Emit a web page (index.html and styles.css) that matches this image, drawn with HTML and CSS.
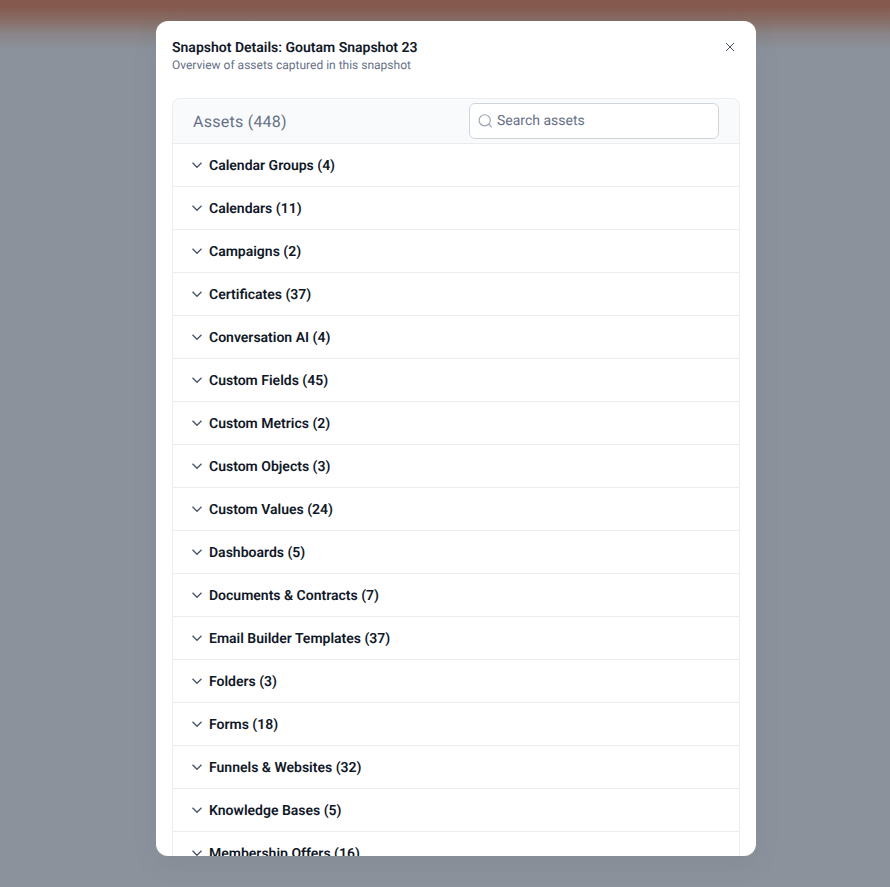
FILE: index.html
```html
<!DOCTYPE html>
<html lang="en">
<head>
<meta charset="utf-8">
<title>Snapshot Details</title>
<link rel="stylesheet" href="styles.css">
</head>
<body>
<div class="backdrop">
  <section class="modal">
    <header class="modal-head">
      <div>
        <h2 class="modal-title">Snapshot Details: Goutam Snapshot 23</h2>
        <p class="modal-sub">Overview of assets captured in this snapshot</p>
      </div>
      <svg class="close" viewBox="0 0 12 12" width="12" height="12"><path d="M2 2l8 8M10 2l-8 8"/></svg>
    </header>
    <div class="card">
      <div class="card-head">
        <span class="card-title">Assets (448)</span>
        <div class="search">
          <svg class="search-icon" viewBox="0 0 16 16" width="16" height="16"><circle cx="6.7" cy="7.3" r="5.6"/><path d="M10.8 11.2l3 3.2"/></svg>
          <span class="search-text">Search assets</span>
        </div>
      </div>
      <div class="row"><svg class="chev" viewBox="0 0 12 12" width="12" height="12"><path d="M1.5 3.8l4.5 4.5 4.5-4.5"/></svg><span class="row-label">Calendar Groups (4)</span></div>
      <div class="row"><svg class="chev" viewBox="0 0 12 12" width="12" height="12"><path d="M1.5 3.8l4.5 4.5 4.5-4.5"/></svg><span class="row-label">Calendars (11)</span></div>
      <div class="row"><svg class="chev" viewBox="0 0 12 12" width="12" height="12"><path d="M1.5 3.8l4.5 4.5 4.5-4.5"/></svg><span class="row-label">Campaigns (2)</span></div>
      <div class="row"><svg class="chev" viewBox="0 0 12 12" width="12" height="12"><path d="M1.5 3.8l4.5 4.5 4.5-4.5"/></svg><span class="row-label">Certificates (37)</span></div>
      <div class="row"><svg class="chev" viewBox="0 0 12 12" width="12" height="12"><path d="M1.5 3.8l4.5 4.5 4.5-4.5"/></svg><span class="row-label">Conversation AI (4)</span></div>
      <div class="row"><svg class="chev" viewBox="0 0 12 12" width="12" height="12"><path d="M1.5 3.8l4.5 4.5 4.5-4.5"/></svg><span class="row-label">Custom Fields (45)</span></div>
      <div class="row"><svg class="chev" viewBox="0 0 12 12" width="12" height="12"><path d="M1.5 3.8l4.5 4.5 4.5-4.5"/></svg><span class="row-label">Custom Metrics (2)</span></div>
      <div class="row"><svg class="chev" viewBox="0 0 12 12" width="12" height="12"><path d="M1.5 3.8l4.5 4.5 4.5-4.5"/></svg><span class="row-label">Custom Objects (3)</span></div>
      <div class="row"><svg class="chev" viewBox="0 0 12 12" width="12" height="12"><path d="M1.5 3.8l4.5 4.5 4.5-4.5"/></svg><span class="row-label">Custom Values (24)</span></div>
      <div class="row"><svg class="chev" viewBox="0 0 12 12" width="12" height="12"><path d="M1.5 3.8l4.5 4.5 4.5-4.5"/></svg><span class="row-label">Dashboards (5)</span></div>
      <div class="row"><svg class="chev" viewBox="0 0 12 12" width="12" height="12"><path d="M1.5 3.8l4.5 4.5 4.5-4.5"/></svg><span class="row-label">Documents &amp; Contracts (7)</span></div>
      <div class="row"><svg class="chev" viewBox="0 0 12 12" width="12" height="12"><path d="M1.5 3.8l4.5 4.5 4.5-4.5"/></svg><span class="row-label">Email Builder Templates (37)</span></div>
      <div class="row"><svg class="chev" viewBox="0 0 12 12" width="12" height="12"><path d="M1.5 3.8l4.5 4.5 4.5-4.5"/></svg><span class="row-label">Folders (3)</span></div>
      <div class="row"><svg class="chev" viewBox="0 0 12 12" width="12" height="12"><path d="M1.5 3.8l4.5 4.5 4.5-4.5"/></svg><span class="row-label">Forms (18)</span></div>
      <div class="row"><svg class="chev" viewBox="0 0 12 12" width="12" height="12"><path d="M1.5 3.8l4.5 4.5 4.5-4.5"/></svg><span class="row-label">Funnels &amp; Websites (32)</span></div>
      <div class="row"><svg class="chev" viewBox="0 0 12 12" width="12" height="12"><path d="M1.5 3.8l4.5 4.5 4.5-4.5"/></svg><span class="row-label">Knowledge Bases (5)</span></div>
      <div class="row"><svg class="chev" viewBox="0 0 12 12" width="12" height="12"><path d="M1.5 3.8l4.5 4.5 4.5-4.5"/></svg><span class="row-label">Membership Offers (16)</span></div>
    </div>
  </section>
</div>
</body>
</html>
```

FILE: styles.css
```css
* { box-sizing: border-box; }
html, body { margin: 0; height: 100%; overflow: hidden; }
body {
  font-family: Roboto, "Liberation Sans", sans-serif;
  text-rendering: geometricPrecision;
}

.backdrop {
  height: 887px;
  padding: 21px 134px 31px 156px;
  background: linear-gradient(to bottom, #85594e 0, #85594e 6px, #877069 22px, #8a8589 34px, #8b929c 50px, #8b929c 100%);
}
.modal {
  width: 600px;
  height: 835px;
  padding: 18px 16px 0;
  background: #fff;
  border-radius: 12px;
  overflow: hidden;
  box-shadow: 0 8px 24px rgba(90, 95, 105, 0.12);
}
.modal-head {
  display: flex;
  justify-content: space-between;
  align-items: flex-start;
  height: 59px;
}
.modal-title {
  margin: 1px 0 0;
  font-size: 14px;
  line-height: 16px;
  font-weight: 600;
  color: #101828;
}
.modal-sub {
  margin: 1px 0 0;
  font-size: 12px;
  line-height: 16px;
  font-weight: 400;
  color: #667085;
}
.close {
  margin: 2px 4px 0 0;
  fill: none;
  stroke: #475467;
  stroke-width: 1;
}
.card {
  border: 1px solid #eaecf0;
  border-bottom: 0;
  border-radius: 8px 8px 0 0;
}
.card-head {
  display: flex;
  justify-content: space-between;
  align-items: center;
  height: 45px;
  padding: 0 20px;
  background: #f9fafb;
  border-bottom: 1px solid #eaecf0;
  border-radius: 8px 8px 0 0;
}
.card-title {
  font-size: 16px;
  font-weight: 400;
  letter-spacing: 0.25px;
  color: #667085;
}
.search {
  display: flex;
  align-items: center;
  gap: 3px;
  width: 250px;
  height: 36px;
  padding: 0 8px;
  background: #fff;
  border: 1px solid #d0d5dd;
  border-radius: 6px;
}
.search-icon {
  fill: none;
  stroke: #98a2b3;
  stroke-width: 1.1;
}
.search-text {
  font-size: 14px;
  color: #667085;
}
.row {
  display: flex;
  align-items: center;
  gap: 6px;
  height: 43px;
  padding-left: 18px;
  border-bottom: 1px solid #eaecf0;
  font-size: 14px;
  font-weight: 600;
  color: #101828;
}
.row-label {
  padding-top: 2px;
}
.chev {
  fill: none;
  stroke: #475467;
  stroke-width: 1.3;
}
```
